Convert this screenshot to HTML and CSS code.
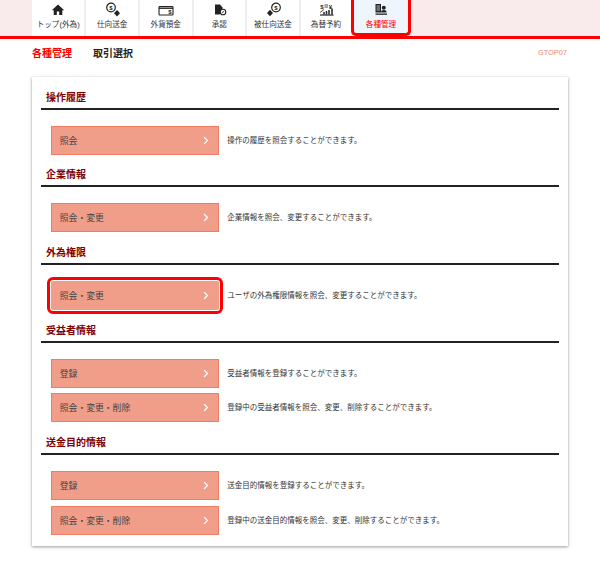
FILE: index.html
```html
<!DOCTYPE html>
<html lang="ja">

<head>
  <meta charset="utf-8">
  <title>各種管理</title>
  <link rel="stylesheet" href="styles.css">
</head>

<body>
  <nav class="tabs">
    <a class="tab">
      <svg class="tab-icon" viewBox="0 0 16 16"><path d="M8 2.500 1.800 8.200h1.900V13h3.100V9.500h2.400V13h3.100V8.200h1.900z" fill="#222"/></svg>
      <span>トップ(外為)</span>
    </a>
    <a class="tab">
      <svg class="tab-icon" viewBox="0 0 16 16"><circle cx="7" cy="5.500" r="4.300" fill="none" stroke="#222" stroke-width="1.200"/><text x="7" y="7.800" class="icon-text">$</text><path d="M13 8l3 3.300-3 3.300-3-3.300z" fill="#222"/></svg>
      <span>仕向送金</span>
    </a>
    <a class="tab">
      <svg class="tab-icon" viewBox="0 0 16 16"><rect x="1" y="4.500" width="14" height="8.500" rx=".8" fill="none" stroke="#222" stroke-width="1.100"/><path d="M1 6.200h14" stroke="#222" stroke-width="1.400"/><text x="11.800" y="12.300" class="icon-text">$</text></svg>
      <span>外貨預金</span>
    </a>
    <a class="tab">
      <svg class="tab-icon" viewBox="0 0 16 16"><path d="M4 2.500h5l2.500 3v2l-3 5H4z" fill="#222"/><circle cx="12" cy="10" r="2.800" fill="#fff" stroke="#222" stroke-width="1.100"/><path d="M10.700 10.800l2.600-1.600" stroke="#222" stroke-width=".9"/></svg>
      <span>承認</span>
    </a>
    <a class="tab">
      <svg class="tab-icon" viewBox="0 0 16 16"><circle cx="11" cy="5.500" r="4.300" fill="none" stroke="#222" stroke-width="1.200"/><text x="11" y="7.800" class="icon-text">$</text><path d="M5 7.800l3 3.200-3 3.200-3-3.200z" fill="#222"/></svg>
      <span>被仕向送金</span>
    </a>
    <a class="tab">
      <svg class="tab-icon" viewBox="0 0 16 16"><text x="4" y="6.500" class="icon-text">$</text><text x="12.500" y="6.500" class="icon-text">¥</text><path d="M6.500 3h3.500M6.500 5h3.500" stroke="#222" stroke-width=".8"/><path d="M2 13h13.500" stroke="#222" stroke-width="1.200"/><path d="M6 12.500v-2.500M8.500 12.500V9M11 12.500V8M14 12.500V6.500" stroke="#222" stroke-width="1.500"/><path d="M2 10.500l4-3" stroke="#222" stroke-width=".8"/></svg>
      <span>為替予約</span>
    </a>
    <a class="tab tab-active">
      <svg class="tab-icon" viewBox="0 0 16 16"><path d="M2.500 2H8v8.500H2.500z" fill="#222"/><path d="M3.500 4h3.500M3.500 6h3.500M3.500 8h3.500" stroke="#fff" stroke-width=".7"/><circle cx="10.800" cy="5.800" r="2" fill="#222"/><path d="M8 10.500c0-1.800 1.200-2.500 2.800-2.500s2.800.7 2.800 2.500z" fill="#222"/><path d="M2.500 11.500h11.500v1.300H2.500z" fill="#222"/></svg>
      <span>各種管理</span>
    </a>
  </nav>

  <header class="page-head">
    <h1>各種管理</h1>
    <h2>取引選択</h2>
    <span class="screen-id">GTOP07</span>
  </header>

  <main class="card">
    <section class="group">
      <h3>操作履歴</h3>
      <div class="rows">
        <div class="row">
          <a class="btn">照会<svg viewBox="0 0 8 12"><path d="M1.500 1.500 6 6l-4.500 4.500" /></svg></a>
          <p>操作の履歴を照会することができます。</p>
        </div>
      </div>
    </section>
    <section class="group">
      <h3>企業情報</h3>
      <div class="rows">
        <div class="row">
          <a class="btn">照会・変更<svg viewBox="0 0 8 12"><path d="M1.500 1.500 6 6l-4.500 4.500" /></svg></a>
          <p>企業情報を照会、変更することができます。</p>
        </div>
      </div>
    </section>
    <section class="group">
      <h3>外為権限</h3>
      <div class="rows">
        <div class="row">
          <a class="btn btn-marked">照会・変更<svg viewBox="0 0 8 12"><path d="M1.500 1.500 6 6l-4.500 4.500" /></svg></a>
          <p>ユーザの外為権限情報を照会、変更することができます。</p>
        </div>
      </div>
    </section>
    <section class="group">
      <h3>受益者情報</h3>
      <div class="rows">
        <div class="row">
          <a class="btn">登録<svg viewBox="0 0 8 12"><path d="M1.500 1.500 6 6l-4.500 4.500" /></svg></a>
          <p>受益者情報を登録することができます。</p>
        </div>
        <div class="row">
          <a class="btn">照会・変更・削除<svg viewBox="0 0 8 12"><path d="M1.500 1.500 6 6l-4.500 4.500" /></svg></a>
          <p>登録中の受益者情報を照会、変更、削除することができます。</p>
        </div>
      </div>
    </section>
    <section class="group">
      <h3>送金目的情報</h3>
      <div class="rows">
        <div class="row">
          <a class="btn">登録<svg viewBox="0 0 8 12"><path d="M1.500 1.500 6 6l-4.500 4.500" /></svg></a>
          <p>送金目的情報を登録することができます。</p>
        </div>
        <div class="row">
          <a class="btn">照会・変更・削除<svg viewBox="0 0 8 12"><path d="M1.500 1.500 6 6l-4.500 4.500" /></svg></a>
          <p>登録中の送金目的情報を照会、変更、削除することができます。</p>
        </div>
      </div>
    </section>
  </main>
</body>

</html>
```

FILE: styles.css
```css
* {
  box-sizing: border-box;
}

body {
  margin: 0;
  padding-bottom: 16px;
  background-color: #fff;
  color: #333;
  font-family: "Liberation Sans", "Noto Sans CJK JP", sans-serif;
}

h1,
h2,
h3,
p {
  margin: 0;
}

/* Top navigation */
.tabs {
  display: flex;
  height: 39px;
  padding-left: 32px;
  background-color: #f9ebeb;
  border-bottom: 3px solid #f00;
}

.tab {
  display: flex;
  flex-direction: column;
  align-items: center;
  flex: none;
  width: 53.600px;
  height: 36px;
  padding-top: 2px;
  background-color: #fff;
  border-right: 2px solid #eee;
  color: #333;
  font-size: 7.600px;
  line-height: 10px;
  white-space: nowrap;
}

.tab-icon {
  flex: none;
  width: 16px;
  height: 16px;
  margin-bottom: 2px;
  overflow: visible;
}

.icon-text {
  fill: #222;
  font-size: 6px;
  font-weight: bold;
  text-anchor: middle;
}

.tab:nth-child(1) {
  width: 54.400px;
}

.tab:nth-child(6) {
  width: 50.500px;
  border-right: 0;
}

.tab-active {
  width: 59.500px;
  padding-top: 2px;
  background-color: #eef5fd;
  border: 3px solid #f00;
  border-top: 0;
  border-radius: 0 0 5px 5px;
  color: #f00;
}

/* Page title */
.page-head {
  display: flex;
  align-items: center;
  height: 28px;
  padding: 0 33px 2px 32px;
}

.page-head h1 {
  width: 61px;
  color: #f00;
  font-size: 10px;
}

.page-head h2 {
  color: #222;
  font-size: 10px;
}

.screen-id {
  margin-left: auto;
  color: #e98a6e;
  font-size: 7.400px;
}

/* Main card */
.card {
  width: 536px;
  height: 469px;
  margin: 10px 0 0 32px;
  padding: 10.700px 9px 0 9px;
  background-color: #fff;
  box-shadow: 0 1px 3px rgba(0, 0, 0, 0.4);
}

.group h3 {
  height: 22px;
  padding: 3px 0 0 5px;
  border-bottom: 2px solid #222;
  color: #800000;
  font-size: 10px;
  line-height: 14px;
}

.rows {
  display: flex;
  flex-direction: column;
  gap: 5.700px;
  padding: 16px 0 10.700px 10.300px;
}

.row {
  display: flex;
  align-items: center;
}

.row p {
  margin-left: 8px;
  padding-bottom: 2px;
  font-size: 7.500px;
}

.btn {
  display: flex;
  flex: none;
  align-items: center;
  justify-content: space-between;
  width: 168px;
  height: 29px;
  padding: 0 9px 0 7.500px;
  background-color: #f09e8a;
  border: 1px solid #f07c64;
  color: #444;
  font-size: 8.800px;
}

.btn svg {
  width: 6px;
  height: 9px;
  fill: none;
  stroke: #fff;
  stroke-width: 1.700;
}

.btn-marked {
  border-radius: 2px;
  border-color: #f09e8a;
  box-shadow: 0 0 0 1px #fff;
  outline: 3px solid #f00;
  outline-offset: 1px;
}
```
